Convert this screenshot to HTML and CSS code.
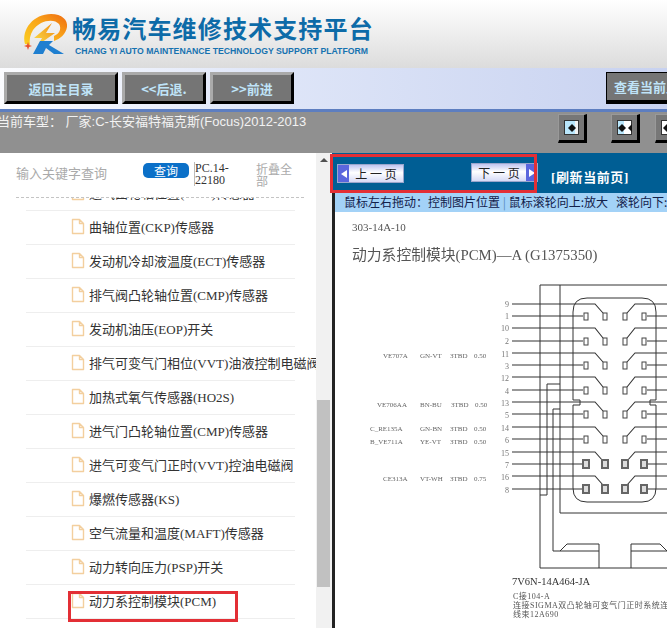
FILE: index.html
```html
<!DOCTYPE html>
<html lang="zh">
<head>
<meta charset="utf-8">
<title>畅易汽车维修技术支持平台</title>
<link rel="stylesheet" href="styles.css">
</head>
<body>
<svg class="defs" width="0" height="0">
  <symbol id="doc" viewBox="0 0 14 17">
    <path d="M1.5 1.5H8.5L12.5 5.5V15.5H1.5Z M8.5 1.5V5.5H12.5" fill="#fff" stroke="#f3cf9e" stroke-width="1.4" stroke-linejoin="round"/>
  </symbol>
</svg>
<header class="brand">
  <svg class="logo" width="52" height="46" viewBox="0 0 52 46">
    <defs>
      <linearGradient id="ring" x1="0" y1="1" x2="1" y2="0">
        <stop offset="0" stop-color="#fbd020"/>
        <stop offset="0.55" stop-color="#f9a51a"/>
        <stop offset="1" stop-color="#ee6a10"/>
      </linearGradient>
      <linearGradient id="bolt" x1="0" y1="1" x2="1" y2="0">
        <stop offset="0" stop-color="#fbe04a"/>
        <stop offset="1" stop-color="#f08a12"/>
      </linearGradient>
    </defs>
    <path d="M4 31C0 16 13 1 30 1C41 1 47 7 46 14C45 21 39 26 33 28L33 23C38 21 41 16 38 11C33 5 19 7 12 17C9 22 8 27 9 32Z" fill="url(#ring)"/>
    <path d="M31 10L13 25H21L17 32L34 20H25Z" fill="url(#bolt)"/>
    <path d="M7 29L8 32L11 33L8 34L7 37L6 34L3 33L6 32Z" fill="#e8502a"/>
    <path d="M19 28H32L28 32L43 41H33L25 35L22 41H12Z" fill="#1f7fd0"/>
  </svg>
  <div class="brand-text">
    <div class="brand-cn">畅易汽车维修技术支持平台</div>
    <div class="brand-en">CHANG YI AUTO MAINTENANCE TECHNOLOGY SUPPORT PLATFORM</div>
  </div>
</header>
<nav class="nav">
  <a class="nav-btn w-home">返回主目录</a>
  <a class="nav-btn w-step">&lt;&lt;后退.</a>
  <a class="nav-btn w-step">&gt;&gt;前进</a>
  <a class="nav-btn nav-last">查看当前上一级</a>
</nav>
<section class="model">
  <div class="model-text">当前车型： 厂家:C-长安福特福克斯(Focus)2012-2013</div>
  <div class="tools">
    <span class="tool"><span class="tool-in one"><i class="ar-l"></i><i class="ar-r"></i></span></span>
    <span class="tool"><span class="tool-in two"><i class="ar-l"></i><i class="ar-r"></i><i class="ar-l spaced"></i></span></span>
    <span class="tool"><span class="tool-in three"><i class="ar-l"></i></span></span>
  </div>
</section>
<main class="main">
  <aside class="side">
    <div class="side-body">
      <div class="search">
        <span class="search-hint">输入关键字查询</span>
        <span class="search-btn">查询</span>
        <span class="search-code">PC.14-22180</span>
        <span class="search-fold">折叠全部</span>
      </div>
      <div class="tree">
        <ul class="tree-list">
          <li class="row"><svg class="doc"><use href="#doc"/></svg>进气凸轮轴位置(CMP)传感器</li>
          <li class="row"><svg class="doc"><use href="#doc"/></svg>曲轴位置(CKP)传感器</li>
          <li class="row"><svg class="doc"><use href="#doc"/></svg>发动机冷却液温度(ECT)传感器</li>
          <li class="row"><svg class="doc"><use href="#doc"/></svg>排气阀凸轮轴位置(CMP)传感器</li>
          <li class="row"><svg class="doc"><use href="#doc"/></svg>发动机油压(EOP)开关</li>
          <li class="row"><svg class="doc"><use href="#doc"/></svg>排气可变气门相位(VVT)油液控制电磁阀</li>
          <li class="row"><svg class="doc"><use href="#doc"/></svg>加热式氧气传感器(HO2S)</li>
          <li class="row"><svg class="doc"><use href="#doc"/></svg>进气门凸轮轴位置(CMP)传感器</li>
          <li class="row"><svg class="doc"><use href="#doc"/></svg>进气可变气门正时(VVT)控油电磁阀</li>
          <li class="row"><svg class="doc"><use href="#doc"/></svg>爆燃传感器(KS)</li>
          <li class="row"><svg class="doc"><use href="#doc"/></svg>空气流量和温度(MAFT)传感器</li>
          <li class="row"><svg class="doc"><use href="#doc"/></svg>动力转向压力(PSP)开关</li>
          <li class="row"><svg class="doc"><use href="#doc"/></svg>动力系控制模块(PCM)</li>
        </ul>
      </div>
      <div class="mark mark-row"></div>
    </div>
    <div class="scrollbar"><span class="scroll-up"></span><span class="scroll-thumb"></span></div>
  </aside>
  <section class="view">
    <div class="pager">
      <span class="page-btn prev"><i class="page-arrow"><b class="tri-l"></b></i><span class="page-label">上 一 页</span></span>
      <span class="page-btn next"><span class="page-label">下 一 页</span><i class="page-arrow"><b class="tri-r"></b></i></span>
      <span class="refresh">[刷新当前页]</span>
      <div class="mark mark-pager"></div>
    </div>
    <div class="hint">鼠标左右拖动：控制图片位置 <span class="hint-sep">|</span> 鼠标滚轮向上:放大&nbsp;&nbsp;&nbsp;滚轮向下:缩小</div>
    <svg class="sheet" viewBox="335 212 332 416" preserveAspectRatio="xMinYMin slice">
      <g class="t-num"><text x="352" y="231">303-14A-10</text></g>
      <text class="t-title" x="352" y="260">动力系控制模块(PCM)—A (G1375350)</text>
      <g class="frame">
        <path d="M667 285H540V568H667"/>
        <path d="M560 285V513H667"/>
        <path d="M560 384H547V495H540"/>
        <path d="M560 409H553V551H599M631 551H667"/>
        <path d="M560 551L567 544H599V568M631 568V544H660L667 551"/>
        <path d="M573 400V312Q573 298 587 298H642Q656 298 656 312V400H650V405H656V488Q656 502 642 502H587Q573 502 573 488V405H580V400Z"/>
      </g>
      <g class="wires">
        <path d="M512 304H595L603 313M667 304H635L627 313"/>
        <path d="M512 316H583M667 316H647"/>
        <path d="M512 328H595L603 338M667 328H635L627 338"/>
        <path d="M512 341H583M667 341H647"/>
        <path d="M512 353H595L603 362M667 353H635L627 362"/>
        <path d="M512 365H583M667 365H647"/>
        <path d="M512 377H595L603 387M667 377H635L627 387"/>
        <path d="M512 390H583M667 390H647"/>
        <path d="M512 402H595L603 411M667 402H635L627 411"/>
        <path d="M512 414H583M667 414H647"/>
        <path d="M512 427H595L603 436M667 427H635L627 436"/>
        <path d="M512 439H583M667 439H647"/>
        <path d="M512 452H595L603 461M667 452H635L627 461"/>
        <path d="M512 464H583M667 464H647"/>
        <path d="M512 476H595L603 485M667 476H635L627 485"/>
        <path d="M512 489H583M667 489H647"/>
      </g>
      <g class="pins">
        <rect x="584" y="313" width="4" height="7"/><rect x="603" y="313" width="4" height="7"/><rect x="623" y="313" width="4" height="7"/><rect x="642" y="313" width="4" height="7"/>
        <rect x="584" y="338" width="4" height="7"/><rect x="603" y="338" width="4" height="7"/><rect x="623" y="338" width="4" height="7"/><rect x="642" y="338" width="4" height="7"/>
        <rect x="584" y="362" width="4" height="7"/><rect x="603" y="362" width="4" height="7"/><rect x="623" y="362" width="4" height="7"/><rect x="642" y="362" width="4" height="7"/>
        <rect x="584" y="387" width="4" height="7"/><rect x="603" y="387" width="4" height="7"/><rect x="623" y="387" width="4" height="7"/><rect x="642" y="387" width="4" height="7"/>
        <rect x="584" y="411" width="4" height="7"/><rect x="603" y="411" width="4" height="7"/><rect x="623" y="411" width="4" height="7"/><rect x="642" y="411" width="4" height="7"/>
        <rect x="584" y="436" width="4" height="7"/><rect x="603" y="436" width="4" height="7"/><rect x="623" y="436" width="4" height="7"/><rect x="642" y="436" width="4" height="7"/>
      </g>
      <g class="pins-heavy">
        <rect x="583" y="460" width="6" height="8"/><rect x="602" y="460" width="6" height="8"/><rect x="622" y="460" width="6" height="8"/><rect x="641" y="460" width="6" height="8"/>
        <rect x="583" y="485" width="6" height="8"/><rect x="602" y="485" width="6" height="8"/><rect x="622" y="485" width="6" height="8"/><rect x="641" y="485" width="6" height="8"/>
      </g>
      <g class="t-pin">
        <text x="509" y="307">9</text><text x="509" y="319">1</text><text x="509" y="331">10</text><text x="509" y="344">2</text>
        <text x="509" y="357">11</text><text x="509" y="369">3</text><text x="509" y="381">12</text><text x="509" y="394">4</text>
        <text x="509" y="406">13</text><text x="509" y="418">5</text><text x="509" y="431">14</text><text x="509" y="443">6</text>
        <text x="509" y="456">15</text><text x="509" y="468">7</text><text x="509" y="480">16</text><text x="509" y="493">8</text>
      </g>
      <g class="t-wire">
        <text x="383" y="358">VE707A</text><text x="420" y="358">GN-VT</text><text x="450" y="358">3TBD</text><text x="474" y="358">0.50</text>
        <text x="377" y="407">VE706AA</text><text x="420" y="407">BN-BU</text><text x="451" y="407">3TBD</text><text x="475" y="407">0.50</text>
        <text x="370" y="431">C_RE135A</text><text x="420" y="431">GN-BN</text><text x="450" y="431">3TBD</text><text x="474" y="431">0.50</text>
        <text x="370" y="444">B_VE711A</text><text x="420" y="444">YE-VT</text><text x="450" y="444">3TBD</text><text x="474" y="444">0.50</text>
        <text x="383" y="481">CE313A</text><text x="420" y="481">VT-WH</text><text x="450" y="481">3TBD</text><text x="474" y="481">0.75</text>
      </g>
      <text class="t-part" x="512" y="585">7V6N-14A464-JA</text>
      <g class="t-note">
        <text x="513" y="599">C接104-A</text>
        <text x="513" y="608">连接SIGMA双凸轮轴可变气门正时系统连</text>
        <text x="513" y="617">线束12A690</text>
      </g>
    </svg>
  </section>
</main>
</body>
</html>
```
FILE: styles.css
```css
* { box-sizing: border-box; }
html, body { margin: 0; padding: 0; }
body {
  width: 667px;
  height: 628px;
  overflow: hidden;
  background: #fff;
  font-family: "Liberation Sans", "Noto Sans CJK SC", sans-serif;
  display: flex;
  flex-direction: column;
}
.defs { position: absolute; }

.brand {
  height: 68px;
  flex: none;
  display: flex;
  align-items: flex-start;
  padding: 13px 0 0 21px;
  background: linear-gradient(#ffffff, #dcdcdc);
}
.logo { flex: none; }
.brand-text { margin-left: -1px; }
.brand-cn {
  font-family: "Noto Sans CJK SC", sans-serif;
  font-weight: 700;
  font-size: 24px;
  line-height: 30px;
  letter-spacing: 1.15px;
  color: #0d6ba8;
  white-space: nowrap;
}
.brand-en {
  margin: 2px 0 0 3px;
  font-weight: 700;
  font-size: 8.68px;
  line-height: 12px;
  color: #1672b0;
  white-space: nowrap;
}

.nav {
  height: 44px;
  flex: none;
  display: flex;
  gap: 4px;
  padding: 4px 0 0 4px;
  background: linear-gradient(90deg, #fbfcff, #dfe6f8 40%, #c8d2f0 100%);
  border-bottom: 3px solid #5d7ec0;
  overflow: hidden;
}
.nav-btn {
  flex: none;
  height: 32px;
  display: flex;
  align-items: center;
  justify-content: center;
  background: #757575;
  border: 3px solid;
  border-color: #aaa #000 #000 #aaa;
  color: #bfe3f8;
  font-family: "Noto Sans CJK SC", sans-serif;
  font-weight: 700;
  font-size: 13px;
  white-space: nowrap;
}
.w-home { width: 114px; }
.w-step { width: 84px; }
.nav-last {
  width: 120px;
  margin-left: 308px;
  justify-content: flex-start;
  padding-left: 7px;
  border-color: #000;
  border-width: 1px 0 4px 1px;
}

.model {
  height: 41px;
  flex: none;
  display: flex;
  justify-content: space-between;
  background: #909090;
  overflow: hidden;
}
.model-text {
  margin: 1px 0 0 -3px;
  font-size: 13px;
  line-height: 18px;
  color: #f2f2f2;
  white-space: nowrap;
}
.tools {
  display: flex;
  gap: 24px;
  padding: 2px 0 0;
  margin-right: -15px;
  width: 124px;
  flex: none;
}
.tool {
  flex: none;
  width: 29px;
  height: 29px;
  padding: 5px;
  background: #777;
  border: 1px solid;
  border-color: #999 #000 #000 #999;
  border-width: 1px 3px 3px 1px;
}
.tools .tool:nth-child(3) { margin-left: -9px; }
.tool-in {
  display: flex;
  height: 100%;
  align-items: center;
  justify-content: center;
  border: 1px solid #333;
  background: #b9e6fb;
}
.tool-in.one { background: linear-gradient(90deg, #b9e6fb 80%, #f3f3f3 80%); }
.tool-in.two { background: linear-gradient(90deg, #b9e6fb 50%, #fff 50%); }
.tool-in.three { background: #fff; justify-content: flex-start; padding-left: 1px; }
.ar-r, .ar-l { display: block; width: 0; height: 0; border-top: 4px solid transparent; border-bottom: 4px solid transparent; }
.ar-r { border-left: 4px solid #111; }
.ar-l { border-right: 4px solid #111; }
.spaced { margin-left: 2px; }

.main {
  flex: 1;
  min-height: 0;
  display: flex;
}
.side {
  width: 332px;
  flex: none;
  display: flex;
  background: #fff;
  min-height: 0;
}
.side-body {
  width: 316px;
  flex: none;
  position: relative;
  display: flex;
  flex-direction: column;
  min-height: 0;
}
.search {
  height: 45px;
  flex: none;
  display: flex;
  margin: 0 0 0 16px;
  width: 288px;
  border-bottom: 1px dashed #c4c4c4;
  align-items: flex-start;
}
.search-hint {
  margin-top: 11px;
  width: 127px;
  flex: none;
  font-size: 13px;
  line-height: 18px;
  color: #aaa;
  font-family: "Noto Sans CJK SC", sans-serif;
}
.search-btn {
  margin-top: 10px;
  width: 46px;
  height: 15px;
  flex: none;
  border-radius: 5px;
  background: #0b70c8;
  color: #fff;
  font-size: 12px;
  line-height: 15px;
  text-align: center;
  font-family: "Noto Sans CJK SC", sans-serif;
}
.search-code {
  margin: 9px 0 0 5px;
  width: 42px;
  flex: none;
  font-family: "Liberation Serif", serif;
  font-size: 12px;
  line-height: 12px;
  color: #333;
  border-left: 1px solid #bbb;
}
.search-fold {
  margin: 10px 0 0 20px;
  width: 38px;
  flex: none;
  font-size: 12px;
  line-height: 12px;
  color: #aaa;
  font-family: "Noto Sans CJK SC", sans-serif;
}
.tree {
  flex: 1;
  min-height: 0;
  overflow: hidden;
}
.tree-list {
  list-style: none;
  margin: -21px 0 0 26px;
  padding: 0;
  width: 269px;
}
.row {
  height: 34px;
  display: flex;
  align-items: center;
  padding-bottom: 2px;
  border-bottom: 1px solid #eeeeee;
  font-family: "Liberation Serif", "Noto Sans CJK SC", serif;
  font-size: 13px;
  color: #333;
  white-space: nowrap;
}
.doc { flex: none; width: 14px; height: 17px; margin: 0 4px 0 45px; }
.mark { position: absolute; border: 3px solid #e32f35; }
.mark-row { left: 68px; top: 438px; width: 170px; height: 31px; }
.scrollbar {
  width: 16px;
  flex: none;
  background: #f1f1f1;
  position: relative;
}
.scroll-up {
  position: absolute;
  left: 4px;
  top: 5px;
  border-left: 4px solid transparent;
  border-right: 4px solid transparent;
  border-bottom: 4px solid #505050;
}
.scroll-thumb {
  position: absolute;
  left: 1px;
  right: 2px;
  top: 247px;
  height: 187px;
  background: #c1c1c1;
}

.view {
  flex: 1;
  min-width: 0;
  display: flex;
  flex-direction: column;
  border-left: 3px solid #222;
  position: relative;
}
.pager {
  height: 40px;
  flex: none;
  background: #005e94;
  display: flex;
  align-items: flex-start;
  position: relative;
  margin-left: -3px;
  padding-left: 5px;
}
.page-btn {
  display: flex;
  align-items: stretch;
  height: 19px;
  flex: none;
  width: 67px;
  background: linear-gradient(#bfc4f0, #fff 45%, #d6daf6);
  border: 1px solid #9aa6cc;
  color: #222;
}
.page-btn.prev { margin-top: 11px; }
.page-btn.next { margin: 10px 0 0 67px; }
.page-arrow {
  width: 11px;
  flex: none;
  background: #5a66dd;
  display: flex;
  align-items: center;
  justify-content: center;
}
.tri-l, .tri-r { display: block; width: 0; height: 0; border-top: 4px solid transparent; border-bottom: 4px solid transparent; }
.tri-l { border-right: 6px solid #fff; }
.tri-r { border-left: 6px solid #fff; }
.page-label {
  flex: 1;
  text-align: center;
  font-family: "Noto Sans CJK SC", sans-serif;
  font-size: 12px;
  line-height: 17px;
  white-space: nowrap;
}
.refresh {
  margin: 15px 0 0 13px;
  font-family: "Liberation Serif", "Noto Sans CJK SC", serif;
  font-weight: 700;
  font-size: 13px;
  line-height: 20px;
  letter-spacing: 0.6px;
  color: #fff;
  white-space: nowrap;
}
.mark-pager { left: -2px; top: 1px; width: 207px; height: 39px; }
.hint {
  height: 19px;
  flex: none;
  background: #a3d2f7;
  padding-left: 9px;
  font-size: 12px;
  line-height: 18px;
  color: #12204a;
  white-space: nowrap;
  overflow: hidden;
  font-family: "Noto Sans CJK SC", sans-serif;
}
.hint-sep { color: #5a8fc0; }
.sheet { display: block; width: 332px; height: 416px; flex: none; background: #fff; filter: blur(0.35px); }
.frame path, .wires path { fill: none; stroke: #333; stroke-width: 1.1; }
.frame path { stroke-width: 1; }
.pins rect { fill: #fff; stroke: #444; stroke-width: 1; }
.pins-heavy rect { fill: #ddd; stroke: #666; stroke-width: 2; }
.t-num text { font: 11px "Liberation Serif", serif; fill: #555; }
.t-title { font: 14.8px "Liberation Serif", "Noto Sans CJK SC", serif; fill: #555; }
.t-pin text { font: 8px "Liberation Serif", serif; fill: #777; text-anchor: end; }
.t-wire text { font: 7px "Liberation Serif", serif; fill: #666; }
.t-part { font: 10.5px "Liberation Serif", serif; fill: #333; }
.t-note text { font: 8px "Liberation Serif", "Noto Sans CJK SC", serif; fill: #555; letter-spacing: 0.5px; }
```
